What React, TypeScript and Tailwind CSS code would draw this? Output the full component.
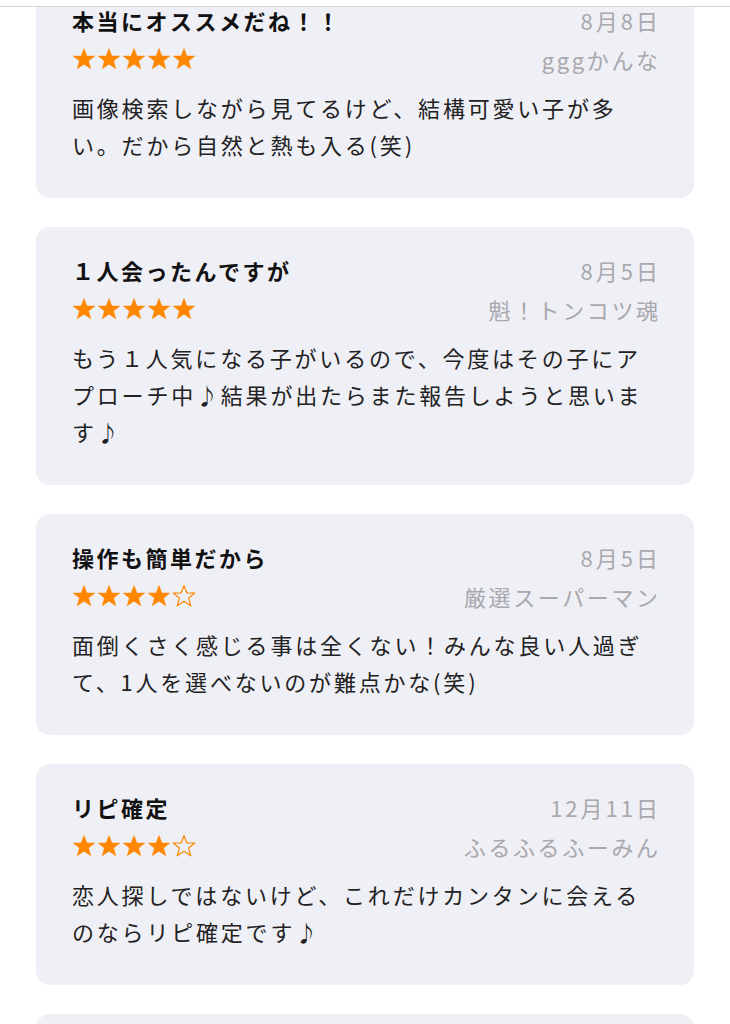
import React from 'react';

type Review = {
    title: string;
    date: string;
    name: string;
    stars: number;
    lines: string[];
};

const reviews: Review[] = [
    { title: '本当にオススメだね！！', date: '8月8日', name: 'gggかんな', stars: 5, lines: ['画像検索しながら見てるけど、結構可愛い子が多', 'い。だから自然と熱も入る(笑)'] },
    { title: '１人会ったんですが', date: '8月5日', name: '魁！トンコツ魂', stars: 5, lines: ['もう１人気になる子がいるので、今度はその子にア', 'プローチ中♪結果が出たらまた報告しようと思いま', 'す♪'] },
    { title: '操作も簡単だから', date: '8月5日', name: '厳選スーパーマン', stars: 4, lines: ['面倒くさく感じる事は全くない！みんな良い人過ぎ', 'て、1人を選べないのが難点かな(笑)'] },
    { title: 'リピ確定', date: '12月11日', name: 'ふるふるふーみん', stars: 4, lines: ['恋人探しではないけど、これだけカンタンに会える', 'のならリピ確定です♪'] },
    { title: '', date: '', name: '', stars: 0, lines: ['', ''] },
];

const font = { fontFamily: '"Noto Sans CJK JP", "Noto Sans", sans-serif' };

function Star({ filled }: { filled: boolean }) {
    return (
        <svg width="24" height="24" viewBox="0 0 24 24">
            <polygon
                points="12,1.5 14.9,9 22.8,9.1 16.6,14 18.8,21.8 12,17.2 5.2,21.8 7.4,14 1.2,9.1 9.1,9"
                fill={filled ? '#ff8700' : 'none'}
                stroke="#ff8700"
                strokeWidth={filled ? 0.5 : 1.2}
                strokeLinejoin="round"
            />
        </svg>
    );
}

function ReviewCard({ review }: { review: Review }) {
    return (
        <div className="rounded-[14px] bg-[#efeff6] px-[36px] pt-[28px] pb-[35px]">
            <div className="flex items-center justify-between h-[30px]">
                <span className="text-[22px] leading-[30px] font-bold text-[#111] tracking-[2.5px]">{review.title}</span>
                <span className="text-[22px] leading-[30px] text-[#a8a8ad] tracking-[3px] -mr-[3px]">{review.date}</span>
            </div>
            <div className="mt-[11px] flex items-center justify-between h-[26px]">
                <div className="flex gap-[1px]">
                    {[0, 1, 2, 3, 4].map((i) => (review.stars ? <Star key={i} filled={i < review.stars} /> : null))}
                </div>
                <span className="text-[22px] leading-[26px] text-[#a8a8ad] tracking-[2.6px] -mr-[2.6px]">{review.name}</span>
            </div>
            <div className="mt-[17px] text-[22px] leading-[37px] text-[#222] tracking-[2.8px]">
                {review.lines.map((line, i) => (
                    <div key={i} className="whitespace-nowrap h-[37px]">{line}</div>
                ))}
            </div>
        </div>
    );
}

export default function App() {
    return (
        <div className="bg-white min-h-screen overflow-hidden" style={font}>
            <div className="fixed top-0 left-0 right-0 h-[7px] bg-white border-b border-[#d4d4d8] z-10" />
            <div className="-mt-[23px] px-[36px] flex flex-col gap-[29px]">
                {reviews.map((r, i) => (
                    <ReviewCard key={i} review={r} />
                ))}
            </div>
        </div>
    );
}
